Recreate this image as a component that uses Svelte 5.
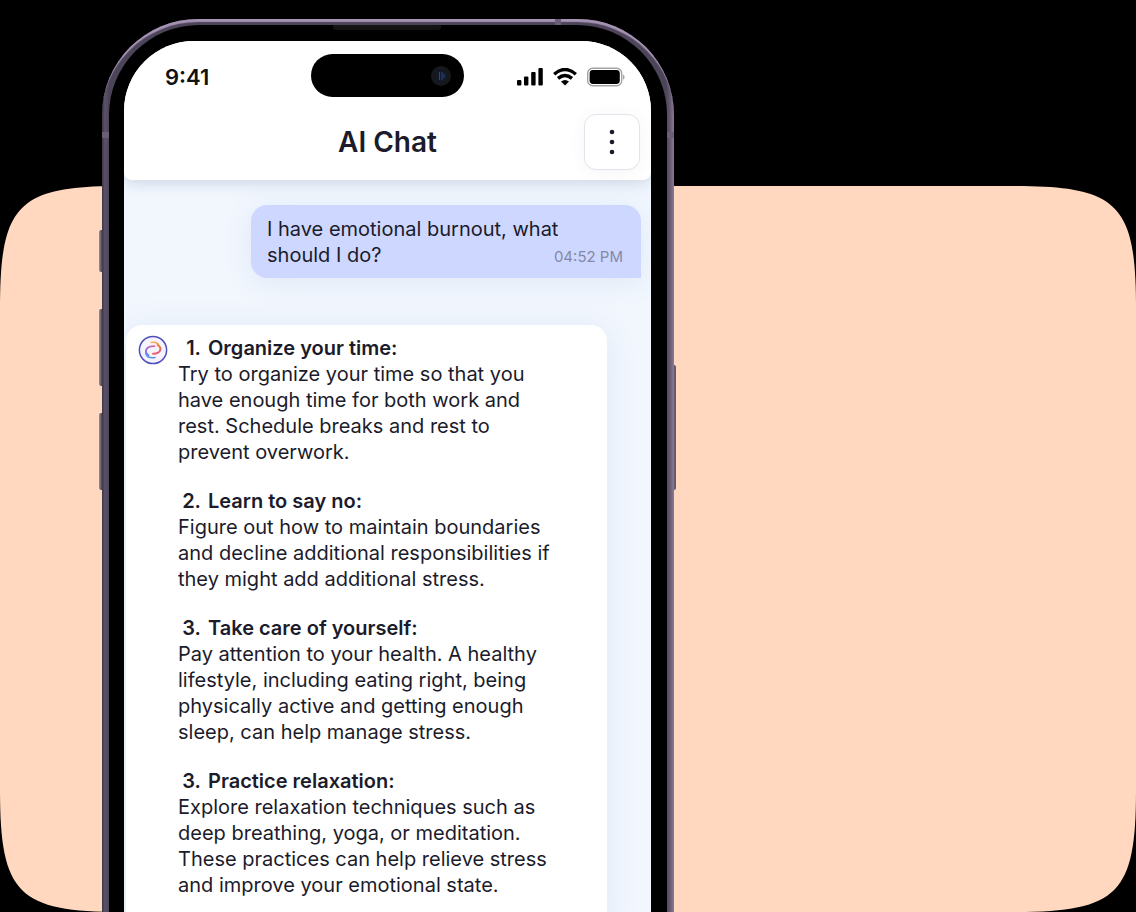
<script lang="ts">
  type Tip = { num: number; title: string; text: string[] };

  const question = "I have emotional burnout, what should I do?";
  const sentAt = "04:52 PM";

  const tips: Tip[] = [
    { num: 1, title: "Organize your time:", text: ["Try to organize your time so that you", "have enough time for both work and", "rest. Schedule breaks and rest to", "prevent overwork."] },
    { num: 2, title: "Learn to say no:", text: ["Figure out how to maintain boundaries", "and decline additional responsibilities if", "they might add additional stress."] },
    { num: 3, title: "Take care of yourself:", text: ["Pay attention to your health. A healthy", "lifestyle, including eating right, being", "physically active and getting enough", "sleep, can help manage stress."] },
    { num: 3, title: "Practice relaxation:", text: ["Explore relaxation techniques such as", "deep breathing, yoga, or meditation.", "These practices can help relieve stress", "and improve your emotional state."] },
  ];
</script>

<main class="scene">
  <!-- peach squircle behind the phone -->
  <svg class="panel" viewBox="0 0 1136 726" preserveAspectRatio="none" aria-hidden="true">
    <path fill="#ffd8bf" d="M0 122C0 18 18 0 122 0H1014C1118 0 1136 18 1136 122V604C1136 708 1118 726 1014 726H122C18 726 0 708 0 604Z" />
  </svg>

  <div class="phone">
    <span class="key mute"></span>
    <span class="key vol-up"></span>
    <span class="key vol-down"></span>
    <span class="key power"></span>
    <span class="seam seam-top"></span>
    <span class="seam seam-left"></span>
    <span class="seam seam-right"></span>

    <div class="bezel">
      <span class="speaker"></span>
      <div class="screen">
        <header>
          <div class="status">
            <span class="clock">9:41</span>
            <div class="island">
              <svg viewBox="0 0 20 20" width="20" height="20" aria-hidden="true">
                <circle cx="10" cy="10" r="10" fill="#17181c" />
                <circle cx="10" cy="10" r="6" fill="#11192a" />
                <path d="M8.5 6v8M11 6v8M13 8v4" stroke="#284a78" stroke-width="1" />
              </svg>
            </div>
            <div class="signals">
              <svg viewBox="0 0 26 18" width="26" height="18" aria-hidden="true">
                <rect x="0" y="12" width="4.4" height="5.4" rx="1" />
                <rect x="7" y="8.4" width="4.4" height="9" rx="1" />
                <rect x="14.2" y="4" width="4.4" height="13.4" rx="1" />
                <rect x="21.4" y="0" width="4.4" height="17.4" rx="1" />
              </svg>
              <svg viewBox="0 0 24 18" width="24" height="18" fill="none" stroke="#000" stroke-width="3.4" aria-hidden="true">
                <path d="M1.2 6.2Q12-3.2 22.8 6.2" />
                <path d="M5 10.4Q12 4.4 19 10.4" />
                <path d="M8 13.6Q12 10.4 16 13.6L12 17.6Z" fill="#000" stroke="none" />
              </svg>
              <svg viewBox="0 0 38 20" width="38" height="20" aria-hidden="true">
                <rect x="0.7" y="1.2" width="34" height="17.6" rx="5" fill="none" stroke="#a3a3a3" stroke-width="1.4" />
                <rect x="2.6" y="3" width="30.2" height="14" rx="3.4" />
                <path d="M36 7.6c2 .8 2 4.4 0 5.2z" fill="#a3a3a3" />
              </svg>
            </div>
          </div>
          <div class="bar">
            <h1>AI Chat</h1>
            <button type="button" aria-label="Menu">
              <svg viewBox="0 0 6 28" width="6" height="28" aria-hidden="true">
                <circle cx="3" cy="4" r="2.3" />
                <circle cx="3" cy="14" r="2.3" />
                <circle cx="3" cy="24" r="2.3" />
              </svg>
            </button>
          </div>
        </header>

        <section class="chat">
          <div class="question">
            <p>{question}</p>
            <time>{sentAt}</time>
          </div>

          <article class="answer">
            <svg class="avatar" viewBox="0 0 30 30" width="30" height="30" fill="none" aria-hidden="true">
              <defs>
                <linearGradient id="warm" x1="12" y1="7" x2="20" y2="20" gradientUnits="userSpaceOnUse">
                  <stop offset="0" stop-color="#f9c04e" />
                  <stop offset="0.6" stop-color="#ef7a4c" />
                  <stop offset="1" stop-color="#dc4a8c" />
                </linearGradient>
                <linearGradient id="cool" x1="16" y1="11" x2="12" y2="23" gradientUnits="userSpaceOnUse">
                  <stop offset="0" stop-color="#e06aa8" />
                  <stop offset="0.5" stop-color="#8a6ae0" />
                  <stop offset="1" stop-color="#4f9bea" />
                </linearGradient>
              </defs>
              <circle cx="15" cy="15" r="13.6" fill="#f6f3fc" stroke="#4f50bb" stroke-width="1.5" />
              <path d="M13 7.400C17.500 6.800 20.400 8.400 21 11" stroke="url(#warm)" stroke-width="1.500" stroke-linecap="round" />
              <path d="M19.500 9.800C24 12.600 23.600 18.600 15 18.800" stroke="url(#warm)" stroke-width="2" stroke-linecap="round" />
              <path d="M16.500 11.200C7.600 11 5.800 17 10.500 20.200" stroke="url(#cool)" stroke-width="1.800" stroke-linecap="round" />
              <path d="M7.800 18.500C8.600 21.500 12 23.400 17 22.600" stroke="url(#cool)" stroke-width="1.500" stroke-linecap="round" />
            </svg>
            <div class="tips">
              {#each tips as tip}
                <div class="tip">
                  <h2><span class="num">{tip.num}.</span>{tip.title}</h2>
                  <p>
                    {#each tip.text as line}
                      <span class="line">{line}</span>
                    {/each}
                  </p>
                </div>
              {/each}
            </div>
          </article>
        </section>
      </div>
    </div>
  </div>
</main>

<style>
  :global(body) { margin: 0; background: #000; }

  .scene {
    display: grid;
    height: 100vh;
    overflow: hidden;
    background: #000;
    font-family: Inter, "Liberation Sans", sans-serif;
    color: #1b1b2b;
  }
  .panel { grid-area: 1 / 1; display: block; width: 100%; height: calc(100vh - 186px); margin-top: 186px; }

  /* phone shell, cut off by the bottom of the scene */
  .phone {
    grid-area: 1 / 1;
    position: relative;
    box-sizing: border-box;
    width: 100%;
    max-width: 572px;
    margin: 19px 0 0 102px;
    padding: 6px 7px 0;
    border-radius: 96px 96px 0 0;
    background: linear-gradient(90deg, #3d3748 0, #5b5267 3px, #4c4458 7px, #4c4458 564px, #655a70 568px, #8b7b98 100%);
    box-shadow: inset 0 4px 1px -1px #a593b4;
  }
  .bezel { position: relative; height: 100%; box-sizing: border-box; padding: 16px 16px 0 15px; border-radius: 90px 90px 0 0; background: #000; }
  .screen { height: 100%; border-radius: 70px 70px 0 0; background: #f2f7fe; overflow: hidden; }
  .speaker { position: absolute; top: 0; left: 50%; width: 108px; height: 5px; margin-left: -55px; border-radius: 0 0 3px 3px; background: #141414; }

  .key { position: absolute; left: -3px; width: 3px; border-radius: 2px 0 0 2px; background: linear-gradient(90deg, #9c8f9d, #484052); }
  .mute { top: 211px; height: 42px; }
  .vol-up { top: 290px; height: 77px; }
  .vol-down { top: 394px; height: 77px; }
  .power { top: 346px; left: auto; right: -2px; height: 125px; border-radius: 0 2px 2px 0; width: 2px; background: #665a70; }

  .seam { position: absolute; background: #6a6075; }
  .seam-top { top: 0; right: 113px; width: 6px; height: 6px; }
  .seam-left { top: 113px; left: 0; width: 7px; height: 6px; }
  .seam-right { top: 113px; right: 0; width: 7px; height: 6px; }

  header { position: relative; border-radius: 0 0 8px 8px; background: #fff; box-shadow: 0 2px 16px rgba(80, 100, 140, 0.26); }
  .status { display: grid; grid-template-columns: 1fr 153px 1fr; align-items: center; padding-top: 13px; }
  .clock { padding: 2px 0 0 41px; font-size: 22px; font-weight: 600; line-height: 28px; color: #111; }
  .island { display: flex; align-items: center; justify-content: flex-end; height: 43px; box-sizing: border-box; padding-right: 13px; border-radius: 22px; background: #000; }
  .signals { display: flex; align-items: center; justify-content: flex-end; gap: 10px; padding: 2px 26px 0 0; }

  .bar { display: grid; grid-template-columns: 56px 1fr 56px; align-items: center; padding: 17px 11px 10px; }
  h1 { grid-column: 2; margin: 0; font-size: 28px; font-weight: 600; line-height: 36px; text-align: center; }
  button {
    display: grid;
    place-items: center;
    height: 56px;
    padding: 0;
    border: 1px solid #e3e3ec;
    border-radius: 12px;
    background: #fff;
    box-shadow: 0 2px 16px rgba(80, 90, 130, 0.06);
    fill: #1b1b2b;
    cursor: pointer;
  }

  .chat { display: flex; flex-direction: column; gap: 47px; padding: 25px 10px 0 2px; }
  .question {
    position: relative;
    align-self: flex-end;
    box-sizing: border-box;
    width: 390px;
    padding: 11px 16px 10px;
    border-radius: 16px 16px 0 16px;
    background: #ced7ff;
    box-shadow: 0 4px 28px rgba(90, 120, 180, 0.12);
    font-size: 20px;
    font-weight: 400;
    line-height: 26px;
  }
  .question p { margin: 0; max-width: 320px; }
  time { position: absolute; right: 18px; bottom: 11px; font-size: 15px; font-weight: 400; line-height: 20px; color: #8488a6; }

  .answer {
    display: flex;
    gap: 10px;
    align-self: flex-start;
    box-sizing: border-box;
    width: 481px;
    padding: 10px 12px 30px;
    border-radius: 16px 16px 0 0;
    background: #fff;
    box-shadow: 0 4px 32px rgba(90, 120, 180, 0.12);
  }
  .avatar { flex: none; }
  .tips { display: flex; flex-direction: column; gap: 23px; font-size: 20px; line-height: 26px; }
  h2 { display: flex; gap: 7px; margin: 0; font-size: 20px; font-weight: 600; line-height: 26px; }
  .num { width: 23px; text-align: right; }
  .tip p { margin: 0; font-weight: 400; }
  .line { display: block; white-space: nowrap; }
</style>
